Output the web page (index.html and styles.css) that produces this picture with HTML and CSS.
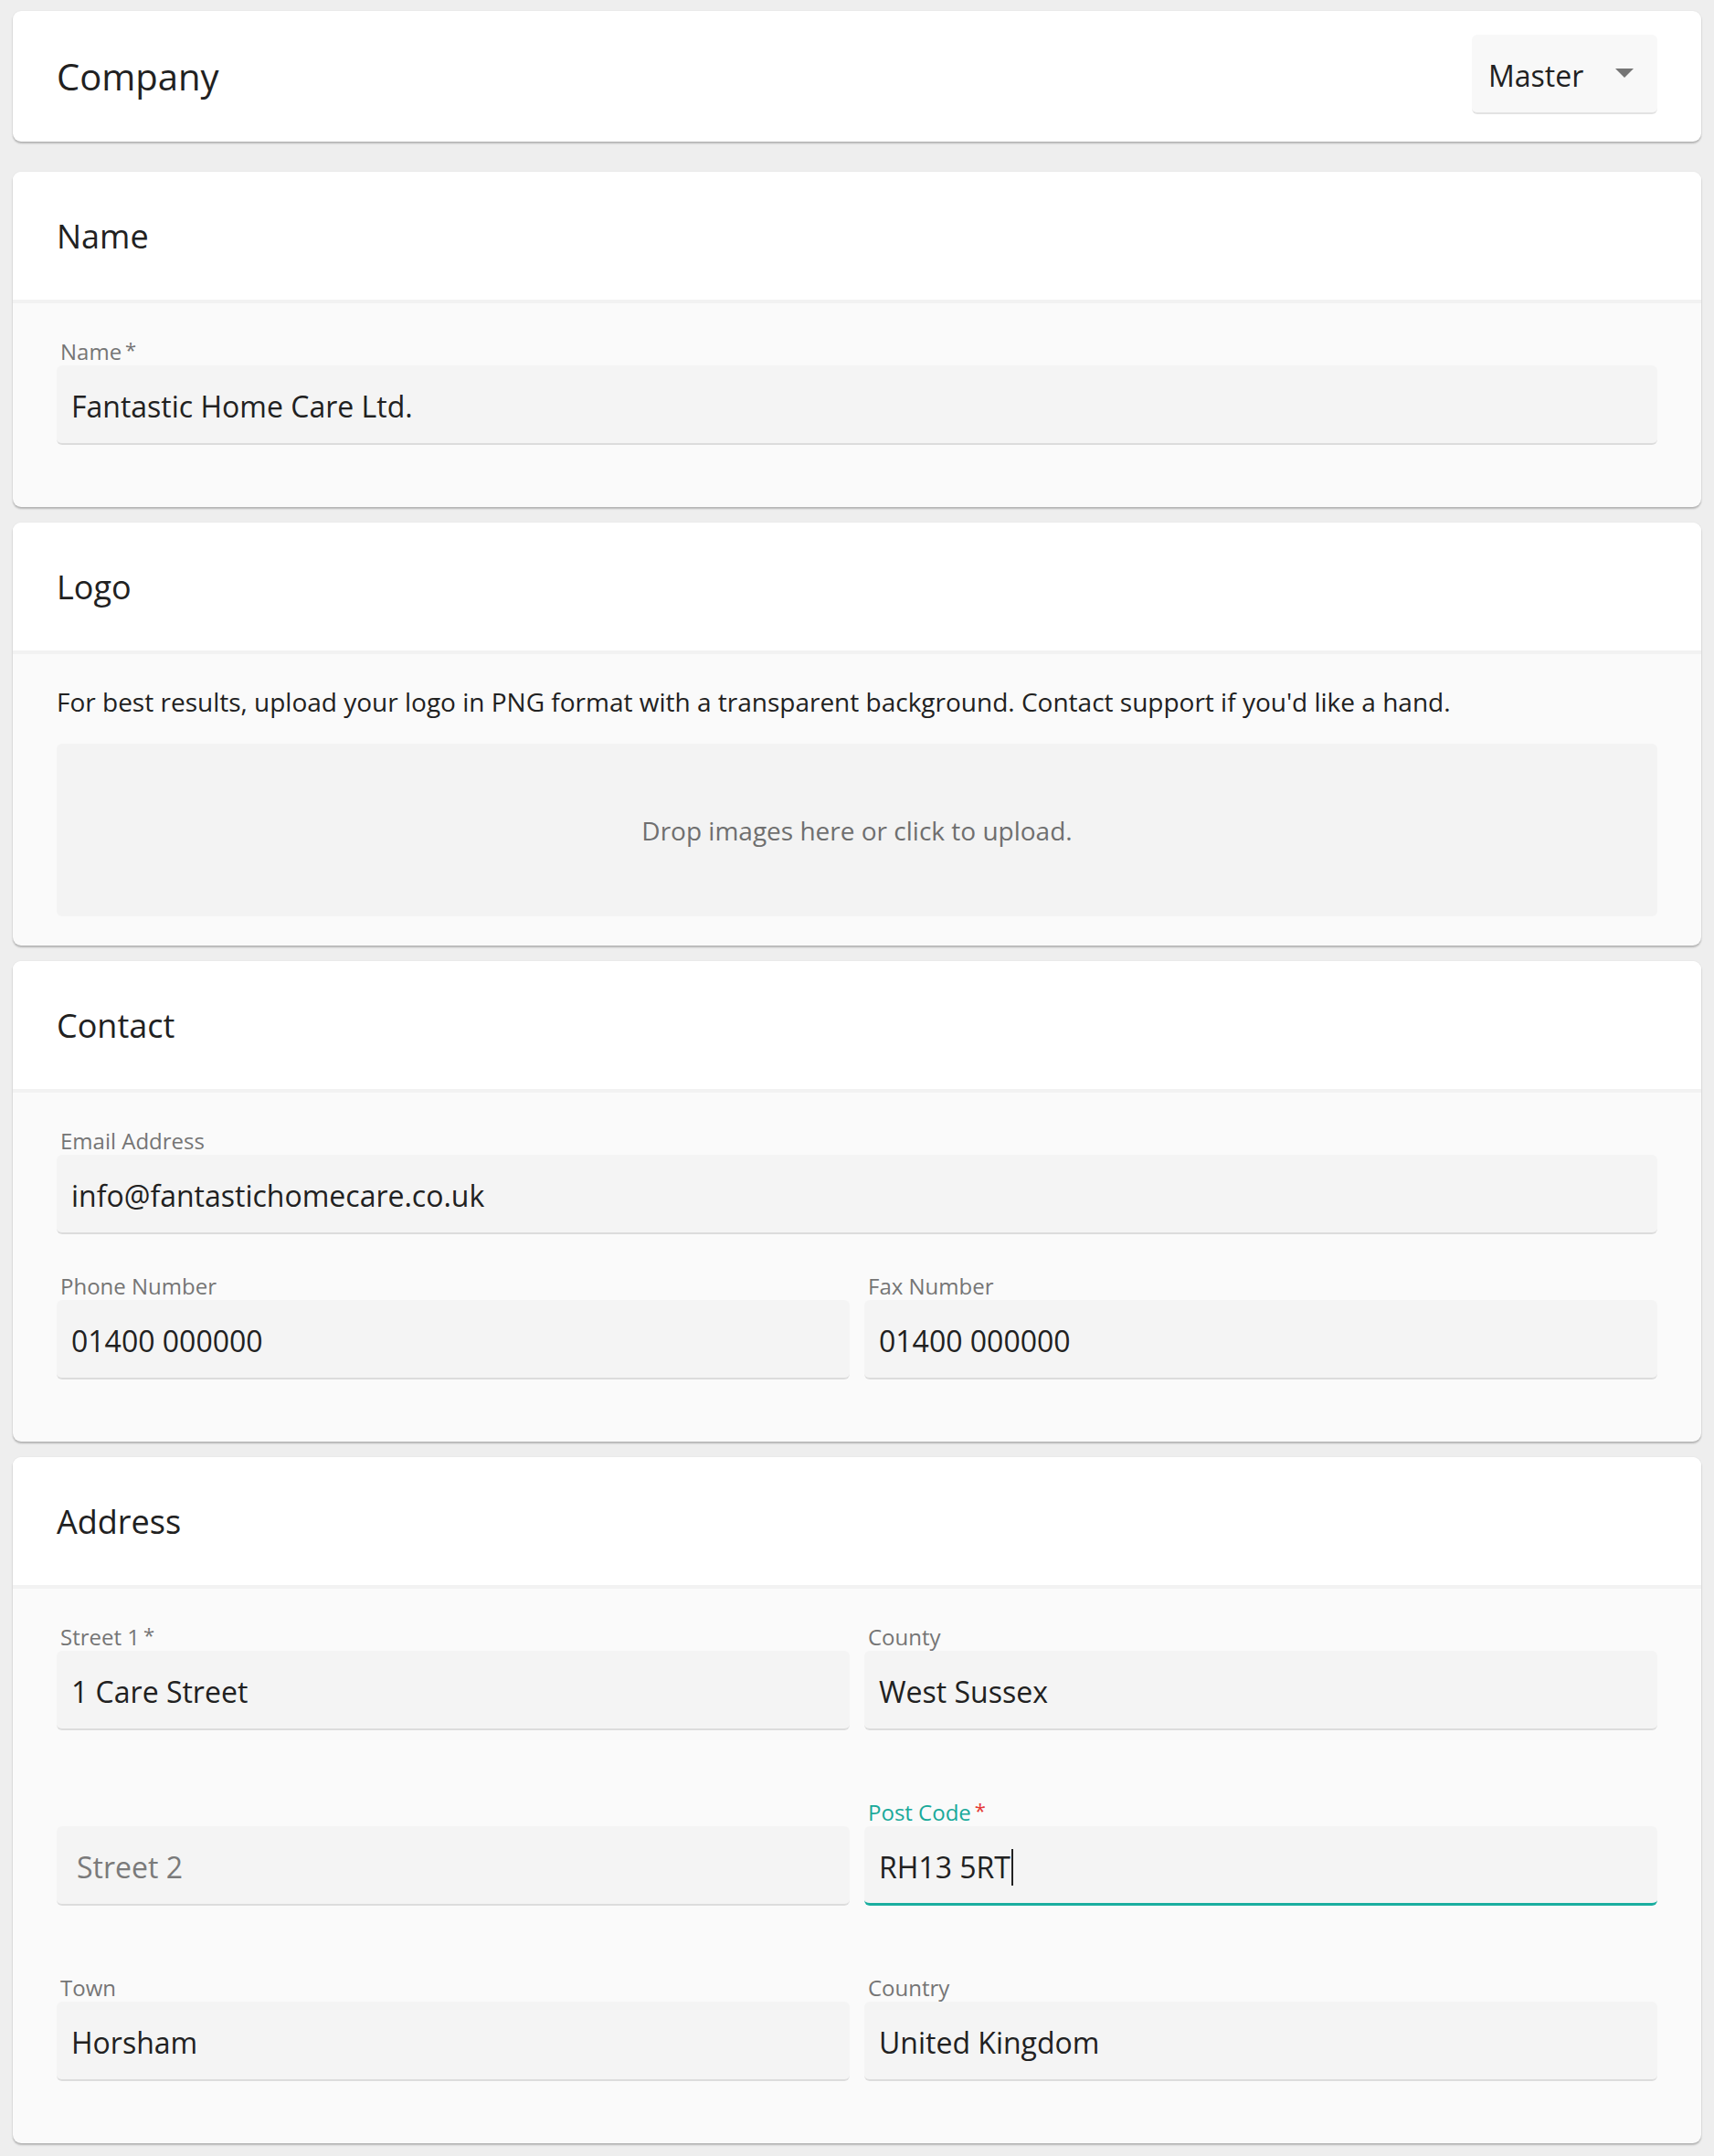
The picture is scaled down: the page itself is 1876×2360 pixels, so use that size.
FILE: index.html
```html
<!DOCTYPE html>
<html lang="en">
<head>
<meta charset="utf-8">
<title>Company</title>
<link rel="stylesheet" href="styles.css">
</head>
<body>
<main class="page">
  <section class="card card-top">
    <h1 class="page-title">Company</h1>
    <div class="select">
      <span class="select-value">Master</span>
      <span class="select-arrow"></span>
    </div>
  </section>

  <section class="card">
    <header class="card-head"><h2>Name</h2></header>
    <div class="card-body">
      <div class="field">
        <label class="field-label">Name<span class="req">*</span></label>
        <div class="control"><span class="value">Fantastic Home Care Ltd.</span></div>
        <div class="sub"></div>
      </div>
    </div>
  </section>

  <section class="card">
    <header class="card-head"><h2>Logo</h2></header>
    <div class="card-body">
      <p class="hint">For best results, upload your logo in PNG format with a transparent background. Contact support if you'd like a hand.</p>
      <div class="dropzone">Drop images here or click to upload.</div>
    </div>
  </section>

  <section class="card">
    <header class="card-head"><h2>Contact</h2></header>
    <div class="card-body">
      <div class="field">
        <label class="field-label">Email Address</label>
        <div class="control"><span class="value">info@fantastichomecare.co.uk</span></div>
        <div class="sub"></div>
      </div>
      <div class="grid-2">
        <div class="field">
          <label class="field-label">Phone Number</label>
          <div class="control"><span class="value">01400 000000</span></div>
          <div class="sub"></div>
        </div>
        <div class="field">
          <label class="field-label">Fax Number</label>
          <div class="control"><span class="value">01400 000000</span></div>
          <div class="sub"></div>
        </div>
      </div>
    </div>
  </section>

  <section class="card">
    <header class="card-head"><h2>Address</h2></header>
    <div class="card-body">
      <div class="grid-2 address-grid">
        <div class="field">
          <label class="field-label">Street 1<span class="req">*</span></label>
          <div class="control"><span class="value">1 Care Street</span></div>
          <div class="sub"></div>
        </div>
        <div class="field">
          <label class="field-label">County</label>
          <div class="control"><span class="value">West Sussex</span></div>
          <div class="sub"></div>
        </div>
        <div class="field">
          <label class="field-label"></label>
          <div class="control"><span class="placeholder">Street 2</span></div>
          <div class="sub"></div>
        </div>
        <div class="field focused">
          <label class="field-label">Post Code<span class="req">*</span></label>
          <div class="control"><span class="value">RH13 5RT</span><span class="caret"></span></div>
          <div class="sub"></div>
        </div>
        <div class="field">
          <label class="field-label">Town</label>
          <div class="control"><span class="value">Horsham</span></div>
          <div class="sub"></div>
        </div>
        <div class="field">
          <label class="field-label">Country</label>
          <div class="control"><span class="value">United Kingdom</span></div>
          <div class="sub"></div>
        </div>
      </div>
    </div>
  </section>
</main>
</body>
</html>
```

FILE: styles.css
```css
* { box-sizing: border-box; }

html, body {
  margin: 0;
  padding: 0;
  background: #eeeeee;
}

body {
  font-family: "Open Sans", "Noto Sans", "Liberation Sans", sans-serif;
  color: #212121;
}

.page {
  padding: 12px 14px 12px 14px;
  display: flex;
  flex-direction: column;
  gap: 17px;
}

.card {
  background: #fafafa;
  border-radius: 9px;
  box-shadow: 0 2px 2px rgba(0, 0, 0, 0.24), 0 0 2px rgba(0, 0, 0, 0.07);
  overflow: hidden;
}

.card-top {
  background: #ffffff;
  height: 143px;
  display: flex;
  align-items: center;
  justify-content: space-between;
  padding: 0 48px 4px 48px;
  margin-bottom: 16px;
}

.page-title {
  margin: 0;
  font-size: 40px;
  font-weight: 400;
  line-height: 1.2;
  padding-top: 4px;
}

.select {
  width: 203px;
  height: 87px;
  background: #f8f8f8;
  border-radius: 6px;
  border-bottom: 2px solid #e2e2e2;
  display: flex;
  align-items: center;
  justify-content: space-between;
  padding: 4px 26px 0 18px;
}

.select-value {
  font-size: 32px;
}

.select-arrow {
  width: 0;
  height: 0;
  border-left: 10px solid transparent;
  border-right: 10px solid transparent;
  border-top: 10px solid #757575;
  margin-top: -6px;
}

.card-head {
  background: #ffffff;
  height: 144px;
  display: flex;
  align-items: center;
  padding: 0 48px;
  border-bottom: 4px solid #f2f2f2;
}

.card-head h2 {
  margin: 0;
  font-size: 36px;
  font-weight: 400;
  line-height: 1.2;
  padding-top: 2px;
}

.card-body {
  padding: 32px 48px;
}

.field {
  display: flex;
  flex-direction: column;
}

.field-label {
  display: block;
  height: 36px;
  font-size: 24px;
  line-height: 30px;
  padding: 6px 0 0 4px;
  color: #757575;
  white-space: nowrap;
}

.req {
  margin-left: 4px;
  font-size: 22px;
  position: relative;
  top: -3px;
}

.control {
  height: 87px;
  background: #f4f4f4;
  border-radius: 6px;
  border-bottom: 2px solid #dcdcdc;
  display: flex;
  align-items: center;
  padding: 4px 16px 0 16px;
  font-size: 32px;
}

.placeholder {
  color: #7a7a7a;
  padding-left: 6px;
}

.sub {
  height: 36px;
}

.focused .field-label {
  color: #19a99a;
}

.focused .req {
  color: #e53935;
}

.focused .control {
  border-bottom: 3px solid #1aae9f;
  padding-top: 5px;
}

.caret {
  display: inline-block;
  width: 2px;
  height: 40px;
  background: #222222;
  margin-left: 1px;
}

.grid-2 {
  display: grid;
  grid-template-columns: 1fr 1fr;
  column-gap: 16px;
}

.address-grid {
  row-gap: 33px;
}

.hint {
  margin: 0 0 26px 0;
  font-size: 28px;
  line-height: 40px;
}

.dropzone {
  height: 189px;
  background: #f3f3f3;
  border-radius: 6px;
  display: flex;
  align-items: center;
  justify-content: center;
  font-size: 28px;
  color: #6f6f6f;
}
```
